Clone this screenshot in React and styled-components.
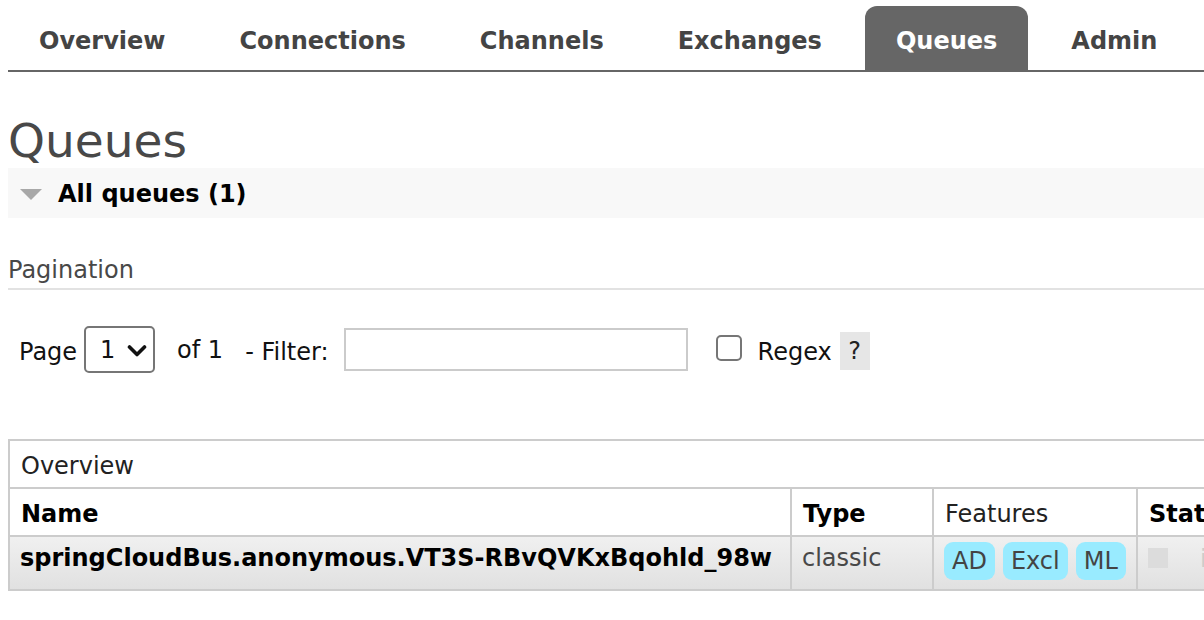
import React from "react";
import styled, { createGlobalStyle } from "styled-components";

const GlobalStyle = createGlobalStyle`
  html, body {
    margin: 0;
    padding: 0;
    overflow: hidden;
    background: #fff;
  }
  body {
    font-family: "DejaVu Sans", Verdana, sans-serif;
    font-size: 24px;
    color: #484848;
  }
  * { box-sizing: border-box; }
`;

const tabs = ["Overview", "Connections", "Channels", "Exchanges", "Queues", "Admin"];

const Page = styled.div`
  padding: 6px 0 0 8px;
  width: 1400px;
`;

const Menu = styled.ul`
  display: flex;
  gap: 12px;
  margin: 0;
  padding: 0;
  list-style: none;
  border-bottom: 2px solid #666;
  width: 1196px;
`;

const Tab = styled.li`
  padding: 21px 31px 15px;
  line-height: 28px;
  font-weight: bold;
  font-size: 24px;
  color: ${(p) => (p.$active ? "#fff" : "#444")};
  background: ${(p) => (p.$active ? "#666" : "transparent")};
  border-radius: 12px 12px 0 0;
`;

const Title = styled.h1`
  margin: 45px 0 4px;
  font-size: 47px;
  line-height: 47px;
  font-weight: normal;
  color: #484848;
`;

const SectionHeader = styled.div`
  display: flex;
  align-items: center;
  height: 50px;
  width: 1196px;
  background: #f8f8f8;
  padding: 2px 0 0 12px;
  font-weight: bold;
  color: #000;
  line-height: 28px;
`;

const Arrow = styled.span`
  width: 0;
  height: 0;
  border-left: 11px solid transparent;
  border-right: 11px solid transparent;
  border-top: 11px solid #a8a8a8;
  margin-right: 16px;
`;

const SubHeading = styled.h3`
  margin: 38px 0 0;
  width: 1196px;
  font-size: 24px;
  font-weight: normal;
  line-height: 28px;
  padding-bottom: 4px;
  border-bottom: 2px solid #e2e2e2;
  color: #484848;
`;

const PagerRow = styled.div`
  display: flex;
  align-items: center;
  margin-top: 36px;
  padding-left: 11px;
  color: #111;
  line-height: 28px;
`;

const PagerText = styled.span`
  margin-left: ${(p) => p.$ml || 0}px;
  margin-top: ${(p) => (p.$lift ? 0 : 5)}px;
`;

const SelectWrap = styled.div`
  position: relative;
  margin-left: 7px;
`;

const Select = styled.select`
  appearance: none;
  width: 71px;
  height: 47px;
  border: 2px solid #767676;
  border-radius: 5px;
  background: #fff;
  font-family: inherit;
  font-size: 24px;
  color: #111;
  padding: 0 0 0 14px;
`;

const Chevron = styled.svg`
  position: absolute;
  right: 8px;
  top: 19px;
  pointer-events: none;
`;

const FilterInput = styled.input`
  margin-left: 15px;
  width: 344px;
  height: 43px;
  border: 2px solid #cbcbcb;
  font-family: inherit;
  font-size: 24px;
`;

const Checkbox = styled.input`
  appearance: none;
  margin: 0 0 4px 28px;
  width: 26px;
  height: 26px;
  border: 2px solid #767676;
  border-radius: 5px;
  background: #fff;
`;

const Help = styled.span`
  margin-left: 8px;
  width: 30px;
  height: 38px;
  display: flex;
  align-items: center;
  justify-content: center;
  background: #e6e6e6;
  color: #222;
  margin-top: 2px;
`;

const Table = styled.table`
  margin-top: 66px;
  border-collapse: separate;
  border-spacing: 0;
  table-layout: fixed;
  width: 1330px;
  border-top: 2px solid #ccc;
  border-left: 2px solid #ccc;
`;

const Col = styled.col`
  width: ${(p) => p.$w}px;
`;

const Cell = styled.td`
  border-right: 2px solid #ccc;
  border-bottom: 2px solid #ccc;
  padding: ${(p) => (p.$data ? "7px 10px 9px" : "11px 11px 7px")};
  line-height: 28px;
  text-align: left;
  vertical-align: top;
  white-space: nowrap;
  overflow: hidden;
  font-weight: ${(p) => (p.$bold ? "bold" : "normal")};
  color: ${(p) => p.$color || "#000"};
`;

const DataRow = styled.tr`
  background: linear-gradient(#f0f0f0, #e0e0e0);
`;

const Badges = styled.div`
  display: flex;
  gap: 8px;
  margin-top: -2px;
`;

const Badge = styled.span`
  background: #99ebff;
  color: #444;
  border-radius: 9px;
  padding: 5px 8px;
  line-height: 28px;
`;

const StateRow = styled.div`
  display: flex;
  align-items: flex-start;
  gap: 32px;
  padding-top: 4px;
`;

const StateBox = styled.span`
  width: 20px;
  height: 20px;
  background: #dcdcdc;
`;

const StateText = styled.span`
  color: #ccc;
  line-height: 22px;
`;

export default function App() {
  return (
    <>
      <GlobalStyle />
      <Page>
        <Menu>
          {tabs.map((t) => (
            <Tab key={t} $active={t === "Queues"}>
              {t}
            </Tab>
          ))}
        </Menu>

        <Title>Queues</Title>
        <SectionHeader>
          <Arrow />
          All queues (1)
        </SectionHeader>

        <SubHeading>Pagination</SubHeading>
        <PagerRow>
          <PagerText>Page</PagerText>
          <SelectWrap>
            <Select defaultValue="1">
              <option value="1">1</option>
            </Select>
            <Chevron width="20" height="12" viewBox="0 0 20 12">
              <polyline
                points="2.5,2 10,9.5 17.5,2"
                fill="none"
                stroke="#111"
                strokeWidth="3.6"
                strokeLinecap="round"
                strokeLinejoin="round"
              />
            </Chevron>
          </SelectWrap>
          <PagerText $ml={22} $lift>
            of 1
          </PagerText>
          <PagerText $ml={22}>- Filter:</PagerText>
          <FilterInput type="text" />
          <Checkbox type="checkbox" />
          <PagerText $ml={16}>Regex</PagerText>
          <Help>?</Help>
        </PagerRow>

        <Table>
          <colgroup>
            <Col $w={782} />
            <Col $w={142} />
            <Col $w={204} />
            <Col $w={200} />
          </colgroup>
          <tbody>
            <tr>
              <Cell colSpan={4} $color="#222">
                Overview
              </Cell>
            </tr>
            <tr>
              <Cell as="th" $bold>Name</Cell>
              <Cell as="th" $bold>Type</Cell>
              <Cell as="th" $color="#222">Features</Cell>
              <Cell as="th" $bold>State</Cell>
            </tr>
            <DataRow>
              <Cell $data $bold>
                springCloudBus.anonymous.VT3S-RBvQVKxBqohld_98w
              </Cell>
              <Cell $data $color="#484848">
                classic
              </Cell>
              <Cell $data>
                <Badges>
                  <Badge>AD</Badge>
                  <Badge>Excl</Badge>
                  <Badge>ML</Badge>
                </Badges>
              </Cell>
              <Cell $data>
                <StateRow>
                  <StateBox />
                  <StateText>idle</StateText>
                </StateRow>
              </Cell>
            </DataRow>
          </tbody>
        </Table>
      </Page>
    </>
  );
}
